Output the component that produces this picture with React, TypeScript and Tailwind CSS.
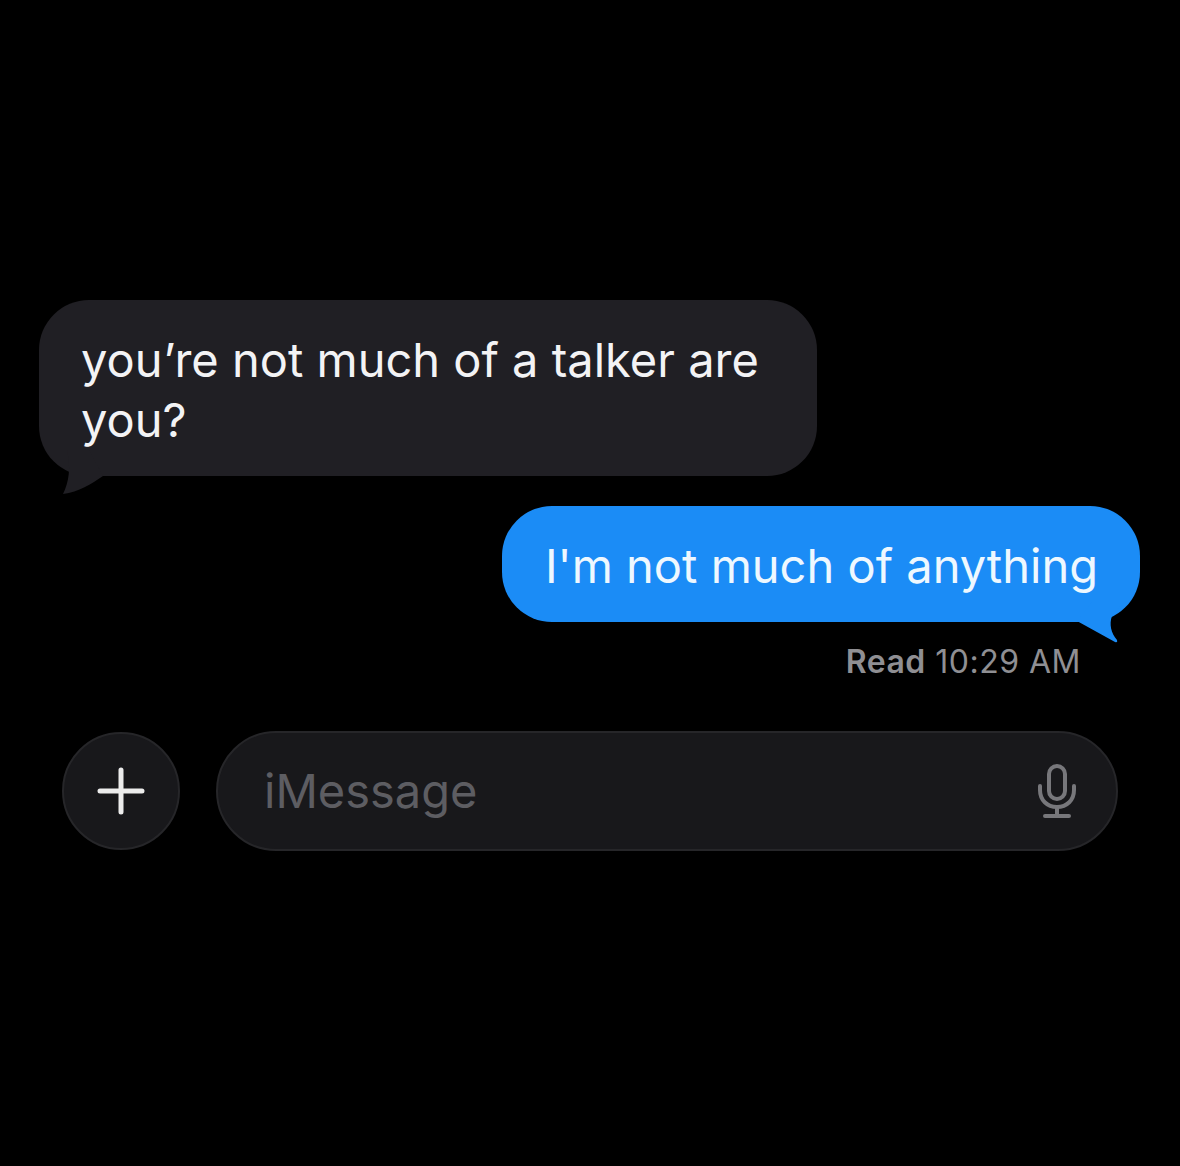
export default function App() {
  return (
    <div className="min-h-[1166px] bg-black pt-[300px] flex flex-col font-['Inter','Liberation_Sans',sans-serif] antialiased">
      <div className="relative ml-[39px] w-[778px] h-[176px] rounded-[50px] bg-[#201f24] pl-[42px] pt-[30px] text-[47px] leading-[60px] text-[#f3f3f5]">
        <p>you’re not much of a talker are</p>
        <p>you?</p>
        <svg className="absolute left-[20px] top-[150px]" width="50" height="46" viewBox="0 0 50 46">
          <path d="M8 0 C 12 18 10 32 4 44 C 20 42 32 34 44 26 L 30 0 Z" fill="#201f24" />
        </svg>
      </div>
      <div className="relative self-end mr-[40px] mt-[30px] w-[638px] h-[116px] rounded-[50px] bg-[#1b8cf6] pl-[43px] pt-[30px] text-[47px] leading-[60px] text-[#eef8ff]">
        <p>I'm not much of anything</p>
        <svg className="absolute left-[570px] top-[80px]" width="60" height="60" viewBox="0 0 60 60">
          <path d="M5 35 L43 56 Q46 57 45 54 C 39 47 37 38 40 30 C 43 24 48 21 54 16 L20 16 Z" fill="#1b8cf6" />
        </svg>
      </div>
      <p className="self-end mr-[99px] mt-[22px] text-[32px] leading-[36px] text-[#8f8f93] tracking-[0.5px]">
        <span className="font-semibold">Read</span> 10:29 AM
      </p>
      <div className="flex items-center gap-[36px] pl-[62px] mt-[51px]">
        <div className="flex h-[118px] w-[118px] items-center justify-center rounded-full border-2 border-[#262629] bg-[#18181b]">
          <svg width="48" height="48" viewBox="0 0 48 48" fill="none" stroke="#ececec" strokeWidth="5" strokeLinecap="round">
            <path d="M24 3 V45 M3 24 H45" />
          </svg>
        </div>
        <div className="flex h-[120px] w-[902px] items-center justify-between rounded-[60px] border-2 border-[#262629] bg-[#18181b] pl-[46px] pr-[40px]">
          <span className="text-[47px] leading-[60px] text-[#5d5d62]">iMessage</span>
          <svg width="38" height="54" viewBox="0 0 38 54" fill="none" stroke="#77777b" strokeWidth="4" strokeLinecap="round">
            <rect x="11" y="2" width="16" height="33" rx="8" />
            <path d="M2 22 V26 C2 36 9 43 19 43 C29 43 36 36 36 26 V22" />
            <path d="M19 43 V51 M7 52 H31" />
          </svg>
        </div>
      </div>
    </div>
  );
}
